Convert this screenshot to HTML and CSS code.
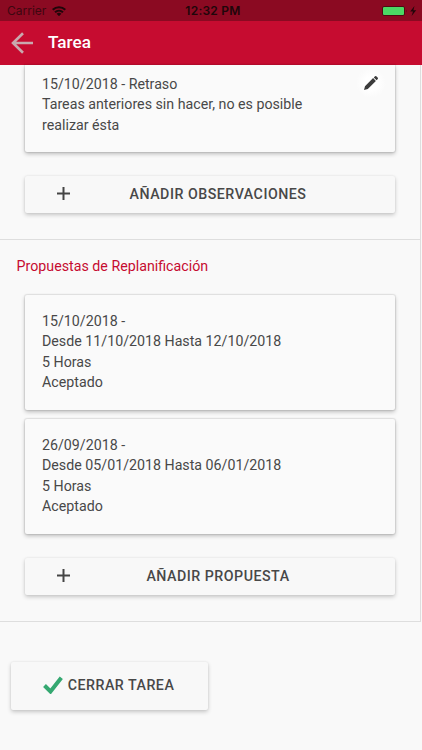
FILE: index.html
```html
<!DOCTYPE html>
<html lang="es">
<head>
<meta charset="utf-8">
<title>Tarea</title>
<link rel="stylesheet" href="styles.css">
</head>
<body>
<div class="screen">
  <div class="status">
    <div class="carrier"><span>Carrier</span>
      <svg class="wifi" viewBox="0 0 14 10"><path d="M0 3.1A10.2 10.2 0 0 1 14 3.1L12.6 4.6A8.1 8.1 0 0 0 1.4 4.6ZM2.3 5.5A6.9 6.9 0 0 1 11.7 5.5L10.3 7A4.8 4.8 0 0 0 3.7 7ZM4.6 7.8A3.5 3.5 0 0 1 9.4 7.8L7 10.2Z"/></svg>
    </div>
    <div class="clock">12:32 PM</div>
    <svg class="battery" viewBox="0 0 35 12"><rect x=".5" y="1.5" width="22" height="9" rx="1.5" fill="#4cd964" stroke="#4f0a13"/><path d="M24.3 4.5q1.4 1.5 0 3z" fill="#4f0a13"/><path d="M32.5 1 28.2 6.5H31L29.6 11 34.2 5.2H31.4Z" fill="#20060a"/></svg>
  </div>
  <header class="bar">
    <svg class="back" viewBox="0 0 22 22"><path d="M12 1.2 2 11 12 20.8M2 11H22" fill="none" stroke="#c9a9ae" stroke-width="2.6"/></svg>
    <h1>Tarea</h1>
  </header>
  <main>
    <section class="section first">
      <article class="card note">
        <p>15/10/2018 - Retraso<br>Tareas anteriores sin hacer, no es posible realizar ésta</p>
        <span class="edit"><svg viewBox="0 0 16 16"><path d="M1 15 2 11.2 10.1 3.1 12.9 5.9 4.8 14ZM10.8 2.4 12 1.2Q12.8.6 13.6 1.4L14.6 2.4Q15.4 3.2 14.8 4L13.6 5.2Z"/></svg></span>
      </article>
      <button class="add"><svg class="plus" viewBox="0 0 13 13"><path d="M6.5 0V13M0 6.5H13"/></svg><span>AÑADIR OBSERVACIONES</span></button>
    </section>
    <section class="section proposals">
      <h2>Propuestas de Replanificación</h2>
      <article class="card"><p>15/10/2018 -<br>Desde 11/10/2018 Hasta 12/10/2018<br>5 Horas<br>Aceptado</p></article>
      <article class="card"><p>26/09/2018 -<br>Desde 05/01/2018 Hasta 06/01/2018<br>5 Horas<br>Aceptado</p></article>
      <button class="add"><svg class="plus" viewBox="0 0 13 13"><path d="M6.5 0V13M0 6.5H13"/></svg><span>AÑADIR PROPUESTA</span></button>
    </section>
    <button class="close"><svg viewBox="0 0 20 18"><path d="M1.5 9.5 7.5 15.5 18.3 1.8" fill="none" stroke="#35a871" stroke-width="4"/></svg><span>CERRAR TAREA</span></button>
  </main>
</div>
</body>
</html>
```

FILE: styles.css
```css
* { box-sizing: border-box; }
body { margin: 0; background: #f9f9f9; color: #484848; font: 14.23px/20.4px Roboto, sans-serif; }
h1, h2, p { margin: 0; }
.screen { width: 422px; height: 750px; overflow: hidden; }

.status { height: 21px; padding: 0 5px 0 7px; display: grid; grid-template-columns: 1fr auto 1fr; align-items: center; background: #8b0a22; color: #20060a; font: 12px/21px Inter, sans-serif; }
.carrier { display: flex; align-items: center; gap: 6px; color: #3d0710; }
.wifi { width: 14px; height: 10px; fill: #20060a; }
.clock { font-weight: 600; letter-spacing: .25px; padding-left: 2px; }
.battery { width: 35px; height: 12px; justify-self: end; }

.bar { height: 44px; padding: 0 11px; display: flex; align-items: center; gap: 15px; background: #c60c30; color: #fff; }
.back { width: 22px; height: 22px; }
h1 { font-size: 17.2px; font-weight: 500; line-height: 43px; padding-bottom: 1px; }

.section { width: 421px; border-right: 1px solid #dedede; border-bottom: 1px solid #dedede; padding: 0 25px; }
.first { height: 175px; }
.proposals { height: 382px; padding-top: 16px; }
.card { width: 370px; padding: 16px 17px; height: 115px; border-radius: 2px; background: #fafafa; box-shadow: 0 0 1px 1px rgba(0,0,0,.08), 0 2px 4px rgba(0,0,0,.24); }
.card + .card { margin-top: 9px; }
.note { height: 87px; padding-top: 9px; display: flex; justify-content: space-between; border-radius: 0 0 2px 2px; }
.note p { width: 280px; }
.edit { width: 30px; height: 30px; margin: -6px -8px 0 0; display: flex; align-items: center; justify-content: center; border-radius: 50%; background: radial-gradient(#fff 30%, #fafafa 70%); }
.edit svg { width: 16px; height: 16px; fill: #3c3c3c; }
h2 { margin: 0 -8.4px 18px; font-size: 14.23px; line-height: 21px; font-weight: 400; color: #c60c30; }

button { border: 0; border-radius: 2px; background: #f8f8f8; color: #484848; font: 500 14.23px/20px Roboto, sans-serif; letter-spacing: .5px; box-shadow: 0 0 2px rgba(0,0,0,.08), 0 2px 4px rgba(0,0,0,.2); display: flex; align-items: center; }
.add { width: 370px; height: 37px; margin-top: 24px; padding: 0 29px 2px 32px; }
.add span { flex: 1; text-align: center; }
.plus { width: 13px; height: 13px; stroke: #444; stroke-width: 2; fill: none; }
.close { width: 197px; height: 48px; margin: 40px 0 0 11px; padding: 0 2px 2px 0; justify-content: center; gap: 5px; }
.close svg { width: 20px; height: 18px; }
```
